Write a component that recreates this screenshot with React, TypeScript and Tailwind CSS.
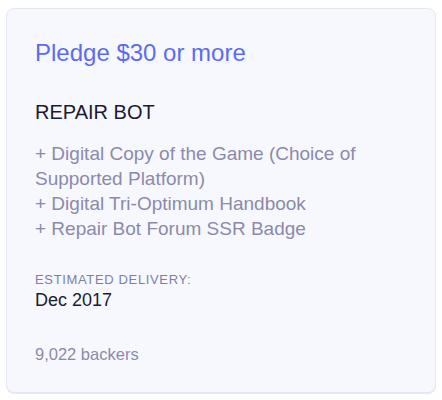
export default function App() {
  return (
    <div className="min-h-[400px] bg-white pt-2 pl-[6px] pr-[6px] font-['Liberation_Sans',Arial,sans-serif]">
      <div className="w-[430px] h-[385px] rounded-lg border border-[#e4e6fa] bg-[#f7f8fd] px-7 pt-7 shadow-[0_1px_0_#e4e6fa]">
        <h2 className="text-[24px] leading-8 text-[#5b6cf2]">Pledge $30 or more</h2>
        <h3 className="mt-[29px] text-[20px] leading-7 text-[#1b1a35]">REPAIR BOT</h3>
        <ul className="mt-[15px] text-[19px] leading-[25px] text-[#8b8aab]">
          <li>+ Digital Copy of the Game (Choice of Supported Platform)</li>
          <li>+ Digital Tri-Optimum Handbook</li>
          <li>+ Repair Bot Forum SSR Badge</li>
        </ul>
        <p className="mt-[31px] text-[13px] leading-4 font-medium tracking-[0.65px] uppercase text-[#7f7ea3]">
          Estimated Delivery:
        </p>
        <p className="text-[18px] leading-6 text-[#1b1a35]">Dec 2017</p>
        <p className="mt-[30px] text-[16.5px] leading-6 text-[#8b8aab]">9,022 backers</p>
      </div>
    </div>
  );
}
